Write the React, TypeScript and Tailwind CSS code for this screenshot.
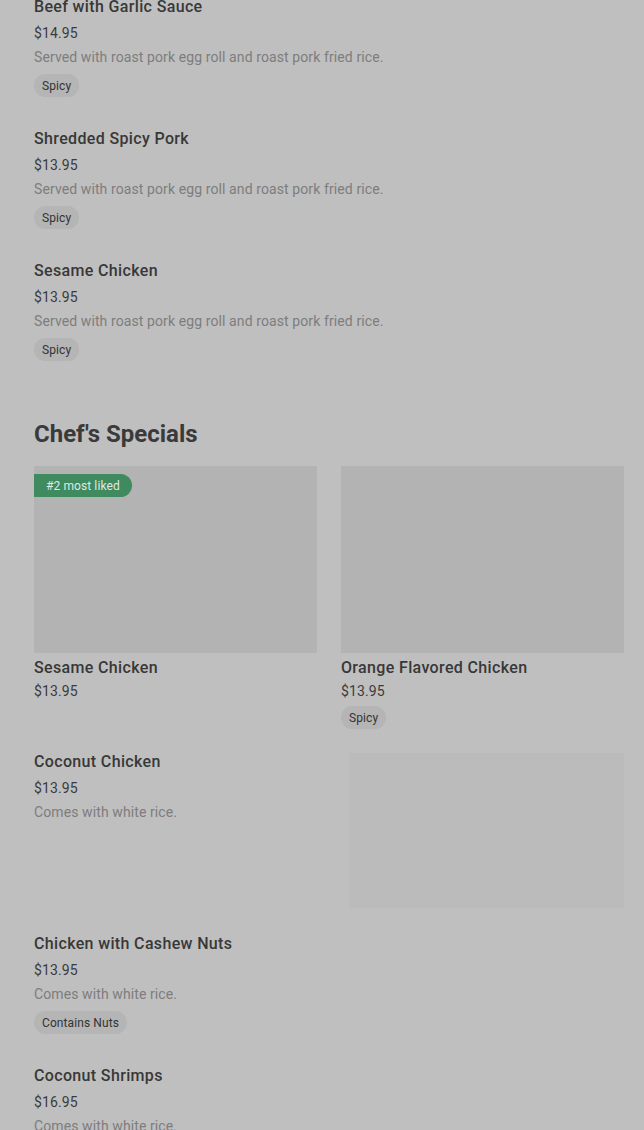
import React from "react";

type Item = {
  name: string;
  price: string;
  desc?: string;
  tags?: string[];
};

const topItems: Item[] = [
  { name: "Beef with Garlic Sauce", price: "$14.95", desc: "Served with roast pork egg roll and roast pork fried rice.", tags: ["Spicy"] },
  { name: "Shredded Spicy Pork", price: "$13.95", desc: "Served with roast pork egg roll and roast pork fried rice.", tags: ["Spicy"] },
  { name: "Sesame Chicken", price: "$13.95", desc: "Served with roast pork egg roll and roast pork fried rice.", tags: ["Spicy"] },
];

const Tag = ({ label }: { label: string }) => (
  <span className="inline-flex h-[23px] items-center rounded-full bg-[#b5b5b5] px-2 text-[12px] tracking-[0.1px] text-[#333333]">
    {label}
  </span>
);

const MenuItem = ({ item }: { item: Item }) => (
  <div className="flex flex-col">
    <div className="text-[16px] leading-6 font-medium tracking-[0.35px] text-[#383838]">{item.name}</div>
    <div className="mt-[4px] text-[14px] leading-5 tracking-[0.1px] text-[#3b3b3b]">{item.price}</div>
    {item.desc && (
      <div className="mt-1 text-[14px] leading-5 tracking-[0.1px] text-[#7d7d7d]">{item.desc}</div>
    )}
    {item.tags && (
      <div className="mt-[7px] flex gap-2">
        {item.tags.map((t) => (
          <Tag key={t} label={t} />
        ))}
      </div>
    )}
  </div>
);

const SpecialCard = ({ item, badge }: { item: Item; badge?: string }) => (
  <div className="flex flex-col">
    <div className="relative h-[187px] w-full bg-[#b3b3b3]">
      {badge && (
        <span className="absolute left-0 top-2 inline-flex h-[23px] items-center rounded-r-full bg-[#3f8a5f] px-3 text-[12px] tracking-[0.1px] text-[#dfe9e3]">
          {badge}
        </span>
      )}
    </div>
    <div className="mt-[3px] text-[16px] leading-6 font-medium tracking-[0.35px] text-[#383838]">{item.name}</div>
    <div className="mt-[1px] text-[14px] leading-5 tracking-[0.1px] text-[#3b3b3b]">{item.price}</div>
    {item.tags && (
      <div className="mt-[5px] flex gap-2">
        {item.tags.map((t) => (
          <Tag key={t} label={t} />
        ))}
      </div>
    )}
  </div>
);

export default function App() {
  return (
    <div
      className="min-h-[1130px] overflow-hidden bg-[#bfbfbf] pl-[34px] pr-[20px]"
      style={{ fontFamily: "Roboto, 'Liberation Sans', sans-serif" }}
    >
      <div className="-mt-[5px] flex flex-col gap-[30px]">
        {topItems.map((it) => (
          <MenuItem key={it.name} item={it} />
        ))}
      </div>

      <h2 className="mt-[57px] text-[24px] leading-8 font-bold text-[#3a3a3a]">
        Chef's Specials
      </h2>

      <div className="mt-4 grid grid-cols-2 gap-x-6">
        <SpecialCard item={{ name: "Sesame Chicken", price: "$13.95" }} badge="#2 most liked" />
        <SpecialCard item={{ name: "Orange Flavored Chicken", price: "$13.95", tags: ["Spicy"] }} />
      </div>

      <div className="mt-[24px] flex justify-between">
        <div className="-mt-[3px]">
          <MenuItem item={{ name: "Coconut Chicken", price: "$13.95", desc: "Comes with white rice." }} />
        </div>
        <div className="h-[155px] w-[275px] bg-[#bbbbbb]" />
      </div>

      <div className="mt-[24px] flex flex-col gap-[30px]">
        <MenuItem item={{ name: "Chicken with Cashew Nuts", price: "$13.95", desc: "Comes with white rice.", tags: ["Contains Nuts"] }} />
        <MenuItem item={{ name: "Coconut Shrimps", price: "$16.95", desc: "Comes with white rice." }} />
      </div>
    </div>
  );
}
